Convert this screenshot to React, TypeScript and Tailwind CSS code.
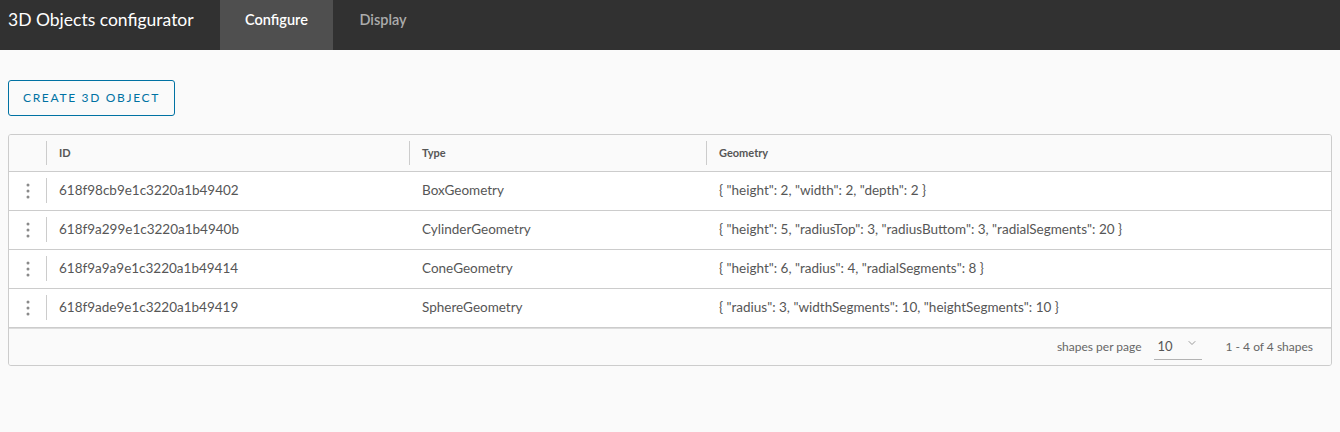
import { ChevronDown } from "lucide-react";

const rows = [
  { id: "618f98cb9e1c3220a1b49402", type: "BoxGeometry", geometry: '{ "height": 2, "width": 2, "depth": 2 }' },
  { id: "618f9a299e1c3220a1b4940b", type: "CylinderGeometry", geometry: '{ "height": 5, "radiusTop": 3, "radiusButtom": 3, "radialSegments": 20 }' },
  { id: "618f9a9a9e1c3220a1b49414", type: "ConeGeometry", geometry: '{ "height": 6, "radius": 4, "radialSegments": 8 }' },
  { id: "618f9ade9e1c3220a1b49419", type: "SphereGeometry", geometry: '{ "radius": 3, "widthSegments": 10, "heightSegments": 10 }' },
];

function Dots() {
  return (
    <svg width="4" height="16" viewBox="0 0 4 16" className="text-[#8a8a8a]">
      <circle cx="2" cy="2" r="1.5" fill="currentColor" />
      <circle cx="2" cy="8" r="1.5" fill="currentColor" />
      <circle cx="2" cy="14" r="1.5" fill="currentColor" />
    </svg>
  );
}

function Sep() {
  return <div className="h-6 w-px bg-[#cccccc]" />;
}

export default function App() {
  return (
    <div className="min-h-[432px] bg-[#fafafa] font-['Lato','Open_Sans',sans-serif] text-[#565656]">
      <header className="flex h-[50px] items-stretch bg-[#313131]">
        <div className="flex w-[220px] items-center pb-[10px] pl-2 text-[17.5px] text-white">3D Objects configurator</div>
        <div className="flex w-[113px] items-center justify-center bg-[#4f4f4f] pb-[10px] text-[14.5px] font-semibold text-white">
          Configure
        </div>
        <div className="flex w-[100px] items-center justify-center pb-[10px] text-[14.5px] font-semibold text-[#acacac]">
          Display
        </div>
      </header>

      <main className="px-2 pt-[30px]">
        <button className="h-[36px] w-[167px] rounded-[3px] border border-[#0072a3] bg-transparent text-[12px] tracking-[0.14em] text-[#0072a3]">
          CREATE 3D OBJECT
        </button>

        <div className="mt-[18px] overflow-hidden rounded-[3px] border border-[#cccccc]">
          <div className="flex h-[37px] items-center border-b border-[#cccccc] bg-[#fafafa] text-[11px] font-bold text-[#565656]">
            <div className="w-[37px]" />
            <Sep />
            <div className="w-[362px] pl-3">ID</div>
            <Sep />
            <div className="w-[296px] pl-3">Type</div>
            <Sep />
            <div className="flex-1 pl-3">Geometry</div>
          </div>
          {rows.map((r) => (
            <div key={r.id} className="flex h-[39px] items-center border-b border-[#cccccc] bg-white pb-px text-[13.5px]">
              <div className="flex w-[37px] justify-center">
                <Dots />
              </div>
              <div className="h-[25px] w-px bg-[#cccccc]" />
              <div className="w-[362px] pl-3">{r.id}</div>
              <div className="w-px" />
              <div className="w-[296px] pl-3">{r.type}</div>
              <div className="w-px" />
              <div className="flex-1 pl-3">{r.geometry}</div>
            </div>
          ))}
          <div className="flex h-[37px] items-center justify-end border-t border-[#dcdcdc] bg-[#fafafa] pr-[18px] text-[12px] text-[#666666]">
            <span>shapes per page</span>
            <div className="ml-3 flex h-[25px] w-[48px] items-center justify-between border-b border-[#b3b3b3] pl-1 pr-1 text-[13px] text-[#565656]">
              <span>10</span>
              <ChevronDown size={12} className="mb-2 text-[#9a9a9a]" />
            </div>
            <span className="ml-6">1 - 4 of 4 shapes</span>
          </div>
        </div>
      </main>
    </div>
  );
}
